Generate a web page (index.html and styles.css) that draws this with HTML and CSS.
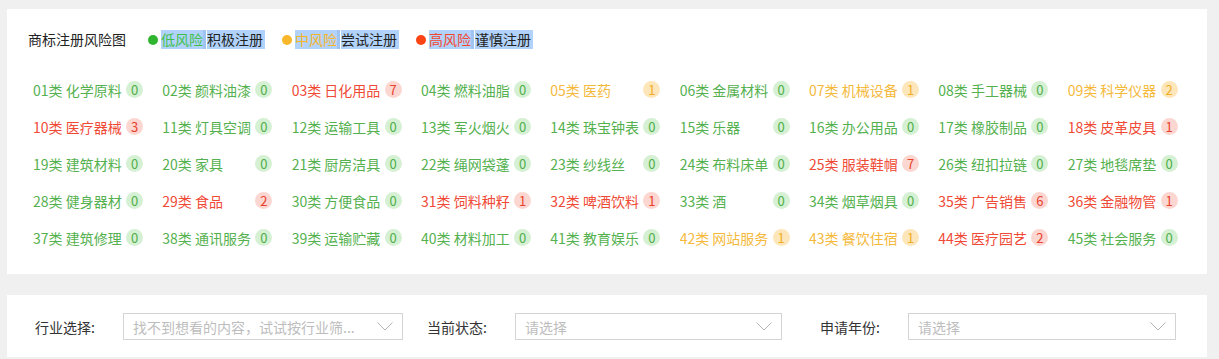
FILE: index.html
```html
<!DOCTYPE html>
<html lang="zh-CN">
<head>
<meta charset="utf-8">
<title>商标注册风险图</title>
<link rel="stylesheet" href="styles.css">
</head>
<body>
<div class="page">
  <section class="card risk-card">
    <div class="legend-row">
      <span class="title">商标注册风险图</span>
      <span class="legend"><i class="dot dot-g"></i><span class="hl c-g">低风险</span><span class="sep"></span><span class="hl hl-end">积极注册</span></span>
      <span class="legend"><i class="dot dot-o"></i><span class="hl c-o">中风险</span><span class="sep"></span><span class="hl hl-end">尝试注册</span></span>
      <span class="legend"><i class="dot dot-r"></i><span class="hl c-r">高风险</span><span class="sep"></span><span class="hl hl-end">谨慎注册</span></span>
    </div>
    <div class="grid">
      <div class="item g"><span class="label">01类 化学原料</span><span class="badge">0</span></div>
      <div class="item g"><span class="label">02类 颜料油漆</span><span class="badge">0</span></div>
      <div class="item r"><span class="label">03类 日化用品</span><span class="badge">7</span></div>
      <div class="item g"><span class="label">04类 燃料油脂</span><span class="badge">0</span></div>
      <div class="item o"><span class="label">05类 医药</span><span class="badge">1</span></div>
      <div class="item g"><span class="label">06类 金属材料</span><span class="badge">0</span></div>
      <div class="item o"><span class="label">07类 机械设备</span><span class="badge">1</span></div>
      <div class="item g"><span class="label">08类 手工器械</span><span class="badge">0</span></div>
      <div class="item o"><span class="label">09类 科学仪器</span><span class="badge">2</span></div>

      <div class="item r"><span class="label">10类 医疗器械</span><span class="badge">3</span></div>
      <div class="item g"><span class="label">11类 灯具空调</span><span class="badge">0</span></div>
      <div class="item g"><span class="label">12类 运输工具</span><span class="badge">0</span></div>
      <div class="item g"><span class="label">13类 军火烟火</span><span class="badge">0</span></div>
      <div class="item g"><span class="label">14类 珠宝钟表</span><span class="badge">0</span></div>
      <div class="item g"><span class="label">15类 乐器</span><span class="badge">0</span></div>
      <div class="item g"><span class="label">16类 办公用品</span><span class="badge">0</span></div>
      <div class="item g"><span class="label">17类 橡胶制品</span><span class="badge">0</span></div>
      <div class="item r"><span class="label">18类 皮革皮具</span><span class="badge">1</span></div>

      <div class="item g"><span class="label">19类 建筑材料</span><span class="badge">0</span></div>
      <div class="item g"><span class="label">20类 家具</span><span class="badge">0</span></div>
      <div class="item g"><span class="label">21类 厨房洁具</span><span class="badge">0</span></div>
      <div class="item g"><span class="label">22类 绳网袋蓬</span><span class="badge">0</span></div>
      <div class="item g"><span class="label">23类 纱线丝</span><span class="badge">0</span></div>
      <div class="item g"><span class="label">24类 布料床单</span><span class="badge">0</span></div>
      <div class="item r"><span class="label">25类 服装鞋帽</span><span class="badge">7</span></div>
      <div class="item g"><span class="label">26类 纽扣拉链</span><span class="badge">0</span></div>
      <div class="item g"><span class="label">27类 地毯席垫</span><span class="badge">0</span></div>

      <div class="item g"><span class="label">28类 健身器材</span><span class="badge">0</span></div>
      <div class="item r"><span class="label">29类 食品</span><span class="badge">2</span></div>
      <div class="item g"><span class="label">30类 方便食品</span><span class="badge">0</span></div>
      <div class="item r"><span class="label">31类 饲料种籽</span><span class="badge">1</span></div>
      <div class="item r"><span class="label">32类 啤酒饮料</span><span class="badge">1</span></div>
      <div class="item g"><span class="label">33类 酒</span><span class="badge">0</span></div>
      <div class="item g"><span class="label">34类 烟草烟具</span><span class="badge">0</span></div>
      <div class="item r"><span class="label">35类 广告销售</span><span class="badge">6</span></div>
      <div class="item r"><span class="label">36类 金融物管</span><span class="badge">1</span></div>

      <div class="item g"><span class="label">37类 建筑修理</span><span class="badge">0</span></div>
      <div class="item g"><span class="label">38类 通讯服务</span><span class="badge">0</span></div>
      <div class="item g"><span class="label">39类 运输贮藏</span><span class="badge">0</span></div>
      <div class="item g"><span class="label">40类 材料加工</span><span class="badge">0</span></div>
      <div class="item g"><span class="label">41类 教育娱乐</span><span class="badge">0</span></div>
      <div class="item o"><span class="label">42类 网站服务</span><span class="badge">1</span></div>
      <div class="item o"><span class="label">43类 餐饮住宿</span><span class="badge">1</span></div>
      <div class="item r"><span class="label">44类 医疗园艺</span><span class="badge">2</span></div>
      <div class="item g"><span class="label">45类 社会服务</span><span class="badge">0</span></div>
    </div>
  </section>

  <section class="card filter-card">
    <div class="field f1">
      <span class="f-label">行业选择:</span>
      <div class="select s1"><span class="ph">找不到想看的内容，试试按行业筛...</span><svg class="chev" width="16" height="9" viewBox="0 0 16 9"><polyline points="0.5,0.5 8,8 15.5,0.5" fill="none" stroke="#b3b3b3" stroke-width="1"/></svg></div>
    </div>
    <div class="field f2">
      <span class="f-label">当前状态:</span>
      <div class="select s2"><span class="ph">请选择</span><svg class="chev" width="16" height="9" viewBox="0 0 16 9"><polyline points="0.5,0.5 8,8 15.5,0.5" fill="none" stroke="#b3b3b3" stroke-width="1"/></svg></div>
    </div>
    <div class="field f3">
      <span class="f-label">申请年份:</span>
      <div class="select s3"><span class="ph">请选择</span><svg class="chev" width="16" height="9" viewBox="0 0 16 9"><polyline points="0.5,0.5 8,8 15.5,0.5" fill="none" stroke="#b3b3b3" stroke-width="1"/></svg></div>
    </div>
  </section>
</div>
</body>
</html>
```

FILE: styles.css
```css
html, body {
  margin: 0;
  padding: 0;
  background: #f0f0f0;
}
body {
  font-family: "Noto Sans CJK SC", "Noto Sans", sans-serif;
  font-size: 14px;
  color: #333;
}
.page {
  padding: 9px 12px 0 7px;
  display: flex;
  flex-direction: column;
  gap: 21px;
}
.card {
  background: #fff;
  width: 1200px;
  box-sizing: border-box;
}
.risk-card {
  height: 265px;
  padding: 21px 10px 0 21px;
}
.legend-row {
  display: flex;
  align-items: center;
  height: 19px;
  line-height: 19px;
}
.title {
  color: #222;
  margin-right: 22px;
}
.legend {
  display: flex;
  align-items: center;
  margin-right: 17px;
}
.dot {
  display: inline-block;
  width: 10px;
  height: 10px;
  border-radius: 50%;
  margin-right: 3px;
}
.dot-g { background: #2fb52f; }
.dot-o { background: #f8b62a; }
.dot-r { background: #fb4414; }
.hl {
  display: inline-block;
  background: #b1d3fb;
  height: 19px;
  line-height: 19px;
}
.hl-end { padding-right: 2px; color: #222; }
.sep {
  display: inline-block;
  width: 3px;
  height: 19px;
  background: #9fc4f2;
  margin-right: 1px;
}
.c-g { color: #3fbf4a; }
.c-o { color: #f7b52a; }
.c-r { color: #f4462e; }

.grid {
  margin-top: 22px;
  padding-left: 5px;
  display: grid;
  grid-template-columns: repeat(9, 1fr);
  grid-auto-rows: 37px;
}
.item {
  display: flex;
  align-items: center;
  white-space: nowrap;
}
.label {
  width: 93px;
  flex: none;
  overflow: hidden;
}
.badge {
  width: 17px;
  height: 17px;
  border-radius: 50%;
  font-size: 13px;
  line-height: 17px;
  text-align: center;
  flex: none;
}
.item.g { color: #55b14f; }
.item.g .badge { background: #d5f0d3; color: #4fae49; }
.item.r { color: #ef4a36; }
.item.r .badge { background: #fcd6d0; color: #e8412d; }
.item.o { color: #f5b93c; }
.item.o .badge { background: #fde6b9; color: #f0ae28; }

.filter-card {
  height: 62px;
  padding: 18px 0 0 28px;
  display: flex;
  align-items: flex-start;
}
.field {
  display: flex;
  align-items: center;
  height: 27px;
}
.f-label {
  width: 88px;
  flex: none;
  color: #333;
}
.f2 { margin-left: 24px; }
.f3 { margin-left: 38px; }
.select {
  box-sizing: border-box;
  height: 27px;
  border: 1px solid #d4d4d4;
  display: flex;
  align-items: center;
  justify-content: space-between;
  padding: 0 9px 0 9px;
}
.s1 { width: 280px; }
.s2 { width: 267px; }
.s3 { width: 268px; }
.ph {
  color: #bdbdbd;
  font-size: 14px;
  white-space: nowrap;
  overflow: hidden;
}
.chev {
  flex: none;
  display: block;
}
```
